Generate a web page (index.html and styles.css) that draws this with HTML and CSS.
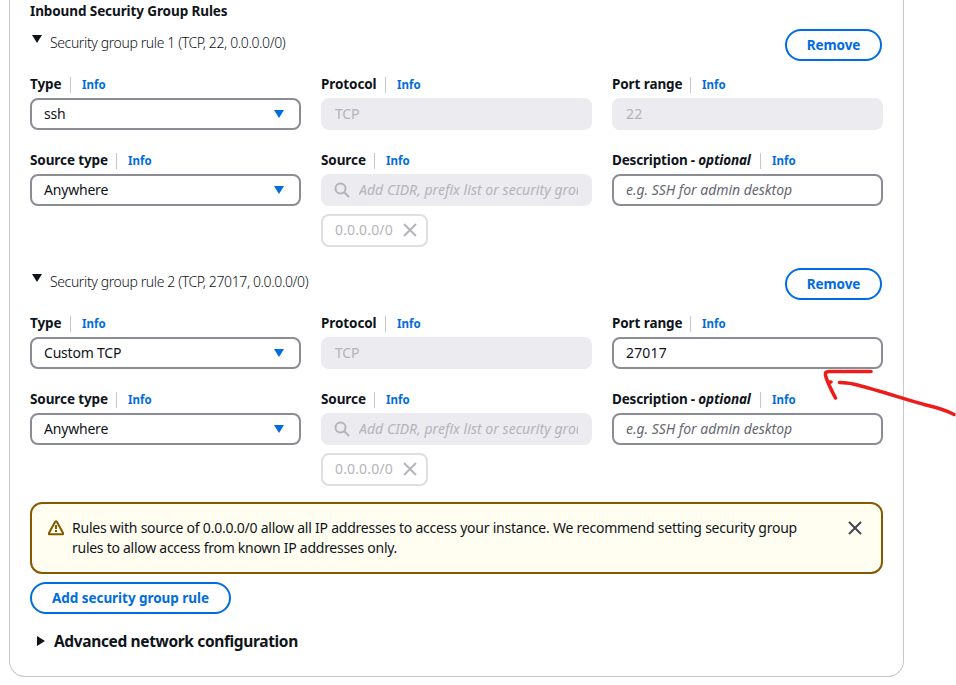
FILE: index.html
```html
<!DOCTYPE html>
<html lang="en">
<head>
<meta charset="utf-8">
<title>Inbound Security Group Rules</title>
<link rel="stylesheet" href="styles.css">
</head>
<body>
<main class="card">
  <h2 class="title">Inbound Security Group Rules</h2>

  <section class="rule">
    <header class="rule-head">
      <svg class="caret" width="12" height="10" viewBox="0 0 12 10"><path d="M1 1h10L6 9z" fill="#0f141a"/></svg>
      <span class="rule-name">Security group rule 1 (TCP, 22, 0.0.0.0/0)</span>
      <button class="btn remove">Remove</button>
    </header>
    <div class="grid">
      <div class="field">
        <div class="label"><b class="l-type">Type</b><a class="info">Info</a></div>
        <div class="control">ssh<svg class="arrow" width="12" height="10" viewBox="0 0 12 10"><path d="M1 1h10L6 9z" fill="#006ce0"/></svg></div>
      </div>
      <div class="field">
        <div class="label"><b class="l-protocol">Protocol</b><a class="info">Info</a></div>
        <div class="control disabled">TCP</div>
      </div>
      <div class="field">
        <div class="label"><b class="l-port">Port range</b><a class="info">Info</a></div>
        <div class="control disabled number">22</div>
      </div>
      <div class="field">
        <div class="label"><b class="l-sourcetype">Source type</b><a class="info">Info</a></div>
        <div class="control">Anywhere<svg class="arrow" width="12" height="10" viewBox="0 0 12 10"><path d="M1 1h10L6 9z" fill="#006ce0"/></svg></div>
      </div>
      <div class="field">
        <div class="label"><b class="l-source">Source</b><a class="info">Info</a></div>
        <div class="control disabled search"><svg class="lens" width="16" height="16" viewBox="0 0 16 16"><circle cx="6.5" cy="6.5" r="5" fill="none" stroke="#b4b4bb" stroke-width="2"/><path d="M10.2 10.2L15 15" stroke="#b4b4bb" stroke-width="2"/></svg><span class="hint">Add CIDR, prefix list or security group</span></div>
        <div class="token"><span>0.0.0.0/0</span><svg width="14" height="14" viewBox="0 0 14 14"><path d="M1 1l12 12M13 1L1 13" stroke="#b4b4bb" stroke-width="2"/></svg></div>
      </div>
      <div class="field">
        <div class="label"><b class="l-desc">Description - <i>optional</i></b><a class="info">Info</a></div>
        <div class="control placeholder">e.g. SSH for admin desktop</div>
      </div>
    </div>
  </section>

  <section class="rule">
    <header class="rule-head">
      <svg class="caret" width="12" height="10" viewBox="0 0 12 10"><path d="M1 1h10L6 9z" fill="#0f141a"/></svg>
      <span class="rule-name">Security group rule 2 (TCP, 27017, 0.0.0.0/0)</span>
      <button class="btn remove">Remove</button>
    </header>
    <div class="grid">
      <div class="field">
        <div class="label"><b class="l-type">Type</b><a class="info">Info</a></div>
        <div class="control">Custom TCP<svg class="arrow" width="12" height="10" viewBox="0 0 12 10"><path d="M1 1h10L6 9z" fill="#006ce0"/></svg></div>
      </div>
      <div class="field">
        <div class="label"><b class="l-protocol">Protocol</b><a class="info">Info</a></div>
        <div class="control disabled">TCP</div>
      </div>
      <div class="field">
        <div class="label"><b class="l-port">Port range</b><a class="info">Info</a></div>
        <div class="control number">27017</div>
      </div>
      <div class="field">
        <div class="label"><b class="l-sourcetype">Source type</b><a class="info">Info</a></div>
        <div class="control">Anywhere<svg class="arrow" width="12" height="10" viewBox="0 0 12 10"><path d="M1 1h10L6 9z" fill="#006ce0"/></svg></div>
      </div>
      <div class="field">
        <div class="label"><b class="l-source">Source</b><a class="info">Info</a></div>
        <div class="control disabled search"><svg class="lens" width="16" height="16" viewBox="0 0 16 16"><circle cx="6.5" cy="6.5" r="5" fill="none" stroke="#b4b4bb" stroke-width="2"/><path d="M10.2 10.2L15 15" stroke="#b4b4bb" stroke-width="2"/></svg><span class="hint">Add CIDR, prefix list or security group</span></div>
        <div class="token"><span>0.0.0.0/0</span><svg width="14" height="14" viewBox="0 0 14 14"><path d="M1 1l12 12M13 1L1 13" stroke="#b4b4bb" stroke-width="2"/></svg></div>
      </div>
      <div class="field">
        <div class="label"><b class="l-desc">Description - <i>optional</i></b><a class="info">Info</a></div>
        <div class="control placeholder">e.g. SSH for admin desktop</div>
      </div>
    </div>
  </section>

  <div class="alert">
    <svg class="warn" width="16" height="16" viewBox="0 0 16 16" fill="none" stroke="#855900" stroke-width="2" stroke-linejoin="round"><path d="M7.300 1.500h1.400L15 13v1.200H1V13z"/><path d="M8 5v4M8 10v2"/></svg>
    <p><span class="line1">Rules with source of 0.0.0.0/0 allow all IP addresses to access your instance. We recommend setting security group</span><br><span class="line2">rules to allow access from known IP addresses only.</span></p>
    <svg class="close" width="14" height="14" viewBox="0 0 14 14"><path d="M1 1l12 12M13 1L1 13" stroke="#424650" stroke-width="2"/></svg>
  </div>
  <button class="btn add">Add security group rule</button>
  <div class="advanced"><svg width="10" height="12" viewBox="0 0 10 12"><path d="M1 1v10l8-5z" fill="#0f141a"/></svg><span>Advanced network configuration</span></div>
</main>
<svg class="mark" width="140" height="60" viewBox="820 362 140 60" fill="none" stroke="#ec1c1c" stroke-width="3.6" stroke-linecap="round" stroke-linejoin="round"><path d="M871 371.5H829Q824.500 371.500 825.500 375.500Q828 384 835.500 398M830 382h1M839.500 382.500Q850 382.500 861 386C882 391.500 909 400.500 926 405Q945 409.500 954 414.500"/></svg>
</body>
</html>
```

FILE: styles.css
```css
* { box-sizing: border-box; }
body {
  margin: 0;
  height: 685px;
  overflow: hidden;
  background: #fff;
  color: #0f141a;
  font: 14px/20px "Noto Sans", sans-serif;
}
.card {
  width: 895px;
  height: 677px;
  margin-left: 9px;
  padding: 1px 20px 0;
  border: 1px solid #c6c6cd;
  border-top: 0;
  border-radius: 0 0 16px 16px;
}
.title { margin: 0 0 8px; font-size: 13.5px; font-weight: 700; letter-spacing: -0.1px; }
.rule { height: 218px; margin-bottom: 21px; }
.rule-head { display: flex; height: 32px; margin-bottom: 13px; padding-right: 1px; }
.caret { margin: 5px 7px 0 1px; }
.rule-name { margin-top: 4px; font-weight: 300; letter-spacing: -0.38px; white-space: nowrap; }
.btn {
  height: 32px;
  padding: 0;
  border: 2px solid #006ce0;
  border-radius: 16px;
  background: #fff;
  color: #006ce0;
  font: 700 13.5px/20px "Noto Sans", sans-serif;
  white-space: nowrap;
}
.remove { width: 97px; margin-left: auto; letter-spacing: -0.1px; }
.grid { display: grid; grid-template-columns: repeat(3, 271px); gap: 20px; }
.label { display: flex; align-items: center; height: 20px; margin-bottom: 4px; white-space: nowrap; }
.label b { font-size: 13.5px; letter-spacing: -0.1px; }
.label .l-desc { letter-spacing: -0.17px; }
.l-type { width: 32px; }
.l-protocol { width: 56px; }
.l-port { width: 70px; }
.l-sourcetype { width: 78px; }
.l-source { width: 45px; }
.l-desc { width: 140px; }
.info {
  height: 16px;
  margin: 2px 0 0 8px;
  padding-left: 11px;
  border-left: 1px solid #c6c6cd;
  color: #006ce0;
  font-size: 11.5px;
  font-weight: 700;
  line-height: 15px;
}
.control {
  display: flex;
  align-items: center;
  height: 32px;
  padding: 0 12px;
  border: 2px solid #8c8c94;
  border-radius: 8px;
  letter-spacing: -0.2px;
  white-space: nowrap;
}
.number { letter-spacing: 0.15px; }
.arrow { margin: 0 2px 0 auto; }
.disabled { border-color: #ebebf0; background: #ebebf0; color: #b4b4bb; }
.placeholder { color: #656871; font-style: italic; letter-spacing: -0.04px; }
.search { padding-left: 11px; }
.lens { flex: none; margin-right: 9px; }
.hint { overflow: hidden; width: 219px; font-style: italic; letter-spacing: 0.04px; }
.token {
  display: flex;
  align-items: center;
  width: 107px;
  height: 33px;
  margin-top: 8px;
  padding: 0 0 1px 12px;
  border: 2px solid #dedee3;
  border-radius: 8px;
  color: #b4b4bb;
}
.token span { width: 68px; letter-spacing: 0.15px; }
.alert {
  display: flex;
  height: 72px;
  margin-top: -5px;
  padding: 14px 19px 0 16px;
  border: 2px solid #855900;
  border-radius: 12px;
  background: #fffef0;
}
.alert p { margin: 0 0 0 8px; white-space: nowrap; }
.line1 { letter-spacing: -0.23px; }
.line2 { letter-spacing: -0.27px; }
.warn { margin-top: 2px; }
.close { margin: 3px 0 0 auto; }
.add { display: block; width: 201px; margin-top: 8px; letter-spacing: -0.05px; }
.advanced { display: flex; align-items: center; height: 24px; margin: 15px 0 0 6px; font-size: 15.5px; font-weight: 700; letter-spacing: -0.36px; }
.advanced span { margin-left: 8px; }
/* Freehand arrow laid over the form. */
.mark { position: absolute; left: 820px; top: 362px; }
```
